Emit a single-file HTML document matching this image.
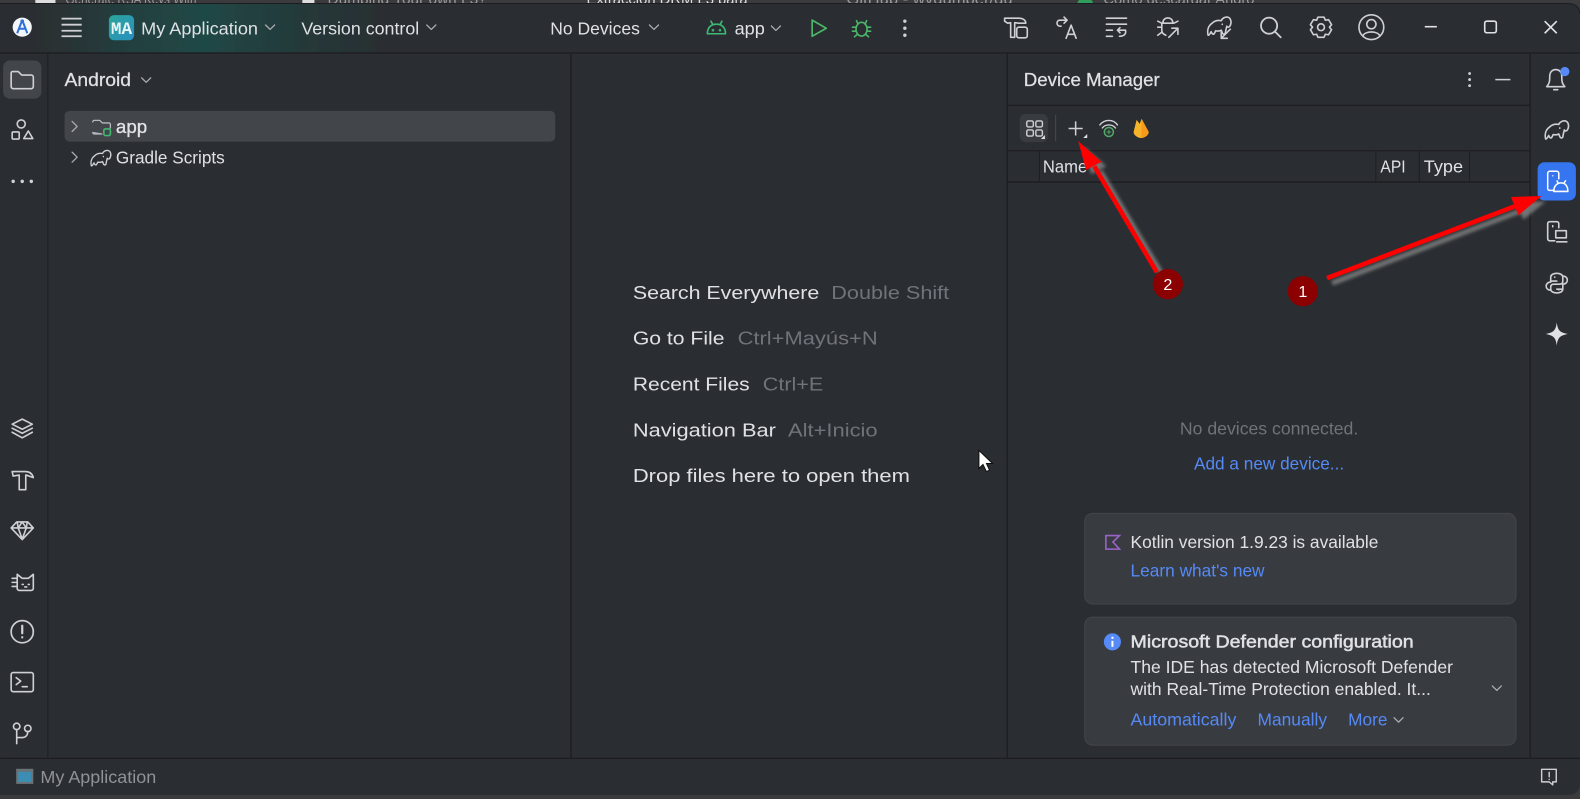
<!DOCTYPE html>
<html><head><meta charset="utf-8"><title>Android Studio</title>
<style>
html,body{margin:0;padding:0;width:1580px;height:799px;overflow:hidden;background:#3a3b3d}
svg{display:block}
text{font-family:"Liberation Sans",sans-serif;font-size:18.5px;fill:#dfe1e5}
.g{fill:#6f737a}.l{fill:#548af7}.s{font-size:17.5px}
.i{fill:none;stroke:#ced0d6;stroke-width:1.6;stroke-linecap:round;stroke-linejoin:round}
.ln{fill:#1e1f22}
</style></head><body>
<svg width="1580" height="799" viewBox="0 0 1568 793" xmlns="http://www.w3.org/2000/svg">
<defs>
<linearGradient id="glow" gradientUnits="userSpaceOnUse" x1="0" y1="0" x2="440" y2="0">
<stop offset="0" stop-color="#2b2d30"/><stop offset=".12" stop-color="#2a3033"/><stop offset=".3" stop-color="#22403f"/><stop offset=".46" stop-color="#1f4846"/><stop offset=".66" stop-color="#243a3a"/><stop offset=".85" stop-color="#292f32"/><stop offset="1" stop-color="#2b2d30"/></linearGradient>
<linearGradient id="ma" x1="0" y1="0" x2="1" y2="1"><stop offset="0" stop-color="#2aa59b"/><stop offset="1" stop-color="#2b8fc0"/></linearGradient>
<filter id="soft" x="0" y="0" width="100%" height="100%"><feGaussianBlur stdDeviation=".35"/></filter>
<filter id="sh" x="-20%" y="-20%" width="140%" height="140%"><feGaussianBlur stdDeviation="1.6"/></filter>
<g id="chev"><path d="M-4.5 -2.2 L0 2.2 L4.5 -2.2" class="i" style="stroke:#a8abb0;stroke-width:1.3"/></g>
<g id="right"><path d="M-2.5 -5 L2.5 0 L-2.5 5" class="i" style="stroke:#a8abb0;stroke-width:1.3"/></g>
<g id="ele"><path d="M-11 9 C-12.500 3 -10 -1 -7 -3 C-4 -6 -1 -6 2 -5.500 C3 -8 6 -9.500 8.500 -9 C12 -8 12.500 -3 10.500 0 C9.500 1.500 8 1 7.500 0 C7 2 6.500 4 6 7 C5 8.500 3.500 8 3 6.500 L2 4 C0 5 -2 5 -3.500 4.500 L-5 7.500 C-6 8.500 -7 7.500 -7.500 6.500 L-8 5.500 C-9 7 -10 9.500 -11 9 Z M3 -2 V-1.800" class="i"/></g>
</defs>

<g filter="url(#soft)">
<!-- browser strip behind -->
<rect width="1568" height="793" fill="#3a3b3d"/>
<rect x="35" y="0" width="20" height="3" fill="#ddd"/>
<text x="65" y="4" textLength="130" lengthAdjust="spacingAndGlyphs" style="font-size:15px;fill:#9a9a9a">Generate RSA Keys With</text>
<text x="325" y="4" textLength="158" lengthAdjust="spacingAndGlyphs" style="font-size:15px;fill:#9a9a9a">Dumping Your own L3?</text>
<rect x="300" y="0" width="12" height="3" fill="#ddd"/>
<text x="582" y="4" textLength="160" lengthAdjust="spacingAndGlyphs" style="font-size:15px;fill:#ddd">Extraccion DRM L3 para</text>
<text x="840" y="4" textLength="165" lengthAdjust="spacingAndGlyphs" style="font-size:15px;fill:#9a9a9a">GitHub - wvdumper/du</text>
<text x="1095" y="4" textLength="150" lengthAdjust="spacingAndGlyphs" style="font-size:15px;fill:#9a9a9a">Cómo descargar Andro</text>
<circle cx="1077" cy="5" r="8" fill="#2f9e5a"/>

<!-- window -->
<path d="M0 4 H1556 Q1568 4 1568 14 V778 Q1568 789 1556 789 H0 Z" fill="#2b2d30"/>
<path d="M0 3.500 H1556 Q1568 4 1568 14" fill="none" stroke="#1e1f22"/>
<rect x="0" y="4" width="440" height="48" fill="url(#glow)"/>
<rect x="0" y="52" width="1568" height="1.3" class="ln"/>
<rect x="47" y="53" width="1" height="699" class="ln"/>
<rect x="566" y="53" width="1.3" height="699" class="ln"/>
<rect x="999" y="53" width="1.3" height="699" class="ln"/>
<rect x="1518" y="53" width="1.3" height="699" class="ln"/>
<rect x="0" y="752" width="1568" height="1.3" class="ln"/>
<rect x="1000" y="104" width="518" height="1.2" class="ln"/>
<rect x="1000" y="149" width="518" height="1.2" class="ln"/>
<rect x="1000" y="180" width="518" height="1.4" class="ln"/>
<rect x="1031" y="150" width="1" height="30" class="ln"/>
<rect x="1365" y="150" width="1" height="30" class="ln"/>
<rect x="1408" y="150" width="1" height="30" class="ln"/>
<rect x="1458" y="150" width="1" height="30" class="ln"/>

<!-- title bar -->
<circle cx="22" cy="27" r="9.500" fill="#f4f6f8"/>
<path d="M22 20 L17 33 M22 20 L27 33 M18 28.500 H26" fill="none" stroke="#2f6fd8" stroke-width="2"/>
<circle cx="22" cy="21" r="1.800" fill="#2f6fd8"/>
<path d="M61 18.500 H81 M61 24.500 H81 M61 30.500 H81 M61 36 H81" fill="none" stroke="#ced0d6" stroke-width="1.800"/>
<rect x="108" y="15" width="25" height="25" rx="5" fill="url(#ma)"/>
<text x="110" y="33.500" textLength="21" lengthAdjust="spacingAndGlyphs" style="font-family:'Liberation Mono',monospace;font-size:17px;font-weight:700;fill:#e8f4f4">MA</text>
<text x="140" y="34" textLength="116" lengthAdjust="spacingAndGlyphs" class="s">My Application</text>
<use href="#chev" x="268" y="27"/>
<text x="299" y="34" textLength="117" lengthAdjust="spacingAndGlyphs" class="s">Version control</text>
<use href="#chev" x="428" y="27"/>
<text x="546" y="34" textLength="89" lengthAdjust="spacingAndGlyphs" class="s">No Devices</text>
<use href="#chev" x="649" y="27"/>
<g transform="translate(711,28)" fill="none" stroke="#3dbb76" stroke-width="1.600" stroke-linecap="round" stroke-linejoin="round">
<path d="M-9 5.500 C-9 -1 -5 -4 0 -4 C5 -4 9 -1 9 5.500 Z M-5.500 -7 L-3.500 -3.500 M5.500 -7 L3.500 -3.500"/><circle cx="-3.500" cy="2" r=".5"/><circle cx="3.500" cy="2" r=".5"/></g>
<text x="729" y="34" textLength="30" lengthAdjust="spacingAndGlyphs" class="s">app</text>
<use href="#chev" x="770" y="28"/>
<path d="M806 20 L820 28 L806 36 Z" fill="none" stroke="#4cb567" stroke-width="1.700" stroke-linejoin="round"/>
<g transform="translate(855,28)" fill="none" stroke="#4cb567" stroke-width="1.600" stroke-linecap="round" stroke-linejoin="round">
<ellipse cx="0" cy="1" rx="5.500" ry="6.800"/><path d="M-3.500 -4 L-5 -7.500 M3.500 -4 L5 -7.500 M-5.500 -1 H-9 M5.500 -1 H9 M-5.500 3 H-9 M5.500 3 H9 M-4 6 L-7 8.500 M4 6 L7 8.500"/></g>
<g fill="#ced0d6"><circle cx="898" cy="21" r="1.700"/><circle cx="898" cy="28" r="1.700"/><circle cx="898" cy="35" r="1.700"/></g>

<g class="i" transform="translate(1008,28)"><path d="M-11 -7 V-10 H3 C7 -10 10 -8 10 -5 H3 L-1 -5.500 V9 H-5 V-5.500 L-8 -5 Z"/><rect x="1" y="-1" width="10.500" height="10.500" rx="2"/></g>
<g class="i" transform="translate(1058,27)"><path d="M1 -7 H-6 C-10 -7 -10 -1 -6 -1 H-5 M1 -7 L-2 -10 M1 -7 L-2 -4"/><path d="M0 11 L5 -2 L10 11 M2 7 H8"/></g>
<g class="i" transform="translate(1108,27)"><path d="M-10 -9 H10 M-10 -3 H10 M-10 3 H-4 M-10 9 H-4 M9 3 H1 L3.500 0.500 M1 3 L3.500 5.500 M9 3 C10 7 7 9 3 9"/></g>
<g class="i" transform="translate(1159,27)"><path d="M-5 -4 C-5 -11 5 -11 5 -4 M-6 -4 H6 M-6 -4 V3 C-6 6 -4 7 -2 8 M-6 0 H-10 M-6 5 L-10 8 M-6 -4 L-10 -6 M6 -4 L10 -6 M1 10 L10 1 M4 1 H10 V7"/></g>
<g transform="translate(1210,26)"><use href="#ele"/><path class="i" d="M11 3 L2 12 M2 6 V12 H8"/></g>
<g class="i" transform="translate(1261,27)" style="stroke-width:1.800"><circle cx="-1.500" cy="-1.500" r="8"/><path d="M4.500 4.500 L10 10"/></g>
<g class="i" transform="translate(1311,27)"><circle r="3.400"/><path d="M-3 -10 H3 L4.300 -7 L7.500 -7.500 L10.500 -2.500 L8.400 0 L10.500 2.500 L7.500 7.500 L4.300 7 L3 10 H-3 L-4.300 7 L-7.500 7.500 L-10.500 2.500 L-8.400 0 L-10.500 -2.500 L-7.500 -7.500 L-4.300 -7 Z"/></g>
<g class="i" transform="translate(1361,27)"><circle r="12.300"/><circle cy="-3" r="4.600"/><path d="M-8.500 8.500 C-6 3.500 6 3.500 8.500 8.500"/></g>
<path d="M1414 26.500 H1426" fill="none" stroke="#dfe1e5" stroke-width="1.600"/>
<rect x="1473.500" y="21" width="11.500" height="11.500" rx="2" fill="none" stroke="#dfe1e5" stroke-width="1.600"/>
<path d="M1533 21 L1545 33 M1545 21 L1533 33" fill="none" stroke="#dfe1e5" stroke-width="1.600"/>

<!-- left strip -->
<rect x="3" y="60" width="38" height="38" rx="7" fill="#43454a"/>
<path class="i" d="M12.500 71 H18 L21.500 74.500 H31 A2 2 0 0 1 33 76.500 V86 A2 2 0 0 1 31 88 H13 A2 2 0 0 1 11 86 V72.500 A1.500 1.500 0 0 1 12.500 71 Z"/>
<g class="i" transform="translate(22,129)"><circle cx="-1" cy="-6" r="4"/><rect x="-10" y="2" width="7" height="7" rx="1"/><path d="M6 1 L10.500 8.500 H1.500 Z"/></g>
<g fill="#ced0d6"><circle cx="13" cy="180" r="1.700"/><circle cx="22" cy="180" r="1.700"/><circle cx="31" cy="180" r="1.700"/></g>
<g class="i" transform="translate(22,425)"><path d="M0 -9 L10 -4 L0 1 L-10 -4 Z M-10 0 L0 5 L10 0 M-10 4 L0 9.500 L10 4"/></g>
<g class="i" transform="translate(22,476)"><path d="M-10 -8 H3 C7 -8 10 -6 11 -2 L4 -4.500 H3.500 V10 H-3 V-4.500 L-9 -3.500 Z"/></g>
<g class="i" transform="translate(22,526)"><path d="M-5.500 -8 H5.500 L11 -2 L0 9.500 L-11 -2 Z M-11 -2 H11 M-4 -2 L0 9 L4 -2 M-5 -8 L-4 -2 L0 -8 L4 -2 L5 -8"/></g>
<g class="i" transform="translate(23,577)"><path d="M-6 -7 L-1 -3 H5 L10 -7 V7 A2 2 0 0 1 8 9 H-4 A2 2 0 0 1 -6 7 Z M-11 -3 H-6 M-11 1 H-6 M-11 5 H-6 M-1 3 L0 3 M5 3 L6 3 M1.500 5.500 H3.500"/></g>
<g class="i" transform="translate(22,627)" style="stroke-width:1.700"><circle r="11"/><path d="M0 -6 V1.500 M0 5.500 V5.600" style="stroke-width:2.200"/></g>
<g class="i" transform="translate(22,677)"><rect x="-11" y="-9.500" width="22" height="19" rx="2"/><path d="M-6 -4.500 L-1.500 -1 L-6 2.500 M0 4.500 H5"/></g>
<g class="i" transform="translate(22,727)"><circle cx="-5.500" cy="-6" r="3.200"/><circle cx="5.500" cy="-4" r="3.200"/><path d="M-5.500 -3 V11 M-5.500 5 H0 C3 5 5.500 3 5.500 -1"/></g>

<!-- project panel -->
<text x="64" y="85.500" textLength="66" lengthAdjust="spacingAndGlyphs" style="font-size:18px;stroke:#dfe1e5;stroke-width:.25">Android</text>
<use href="#chev" x="145" y="79.500"/>
<rect x="64" y="110" width="487" height="30.500" rx="5" fill="#43454a"/>
<use href="#right" x="74" y="125.500"/>
<path class="i" d="M92 121 A1.500 1.500 0 0 1 93.500 119.500 H99 L101.500 122 H108 A1.500 1.500 0 0 1 109.500 123.500 V127 M101 133 H93.500 A1.500 1.500 0 0 1 92 131.500 Z" style="stroke-width:1.300;stroke:#b4b8bf"/>
<rect x="103" y="128" width="6.500" height="6.500" rx="1.500" fill="none" stroke="#3fb96f" stroke-width="1.600"/>
<text x="115" y="132" textLength="31" lengthAdjust="spacingAndGlyphs" style="font-size:18px;stroke:#dfe1e5;stroke-width:.35">app</text>
<use href="#right" x="74" y="156"/>
<g transform="translate(100,157) scale(.85)"><use href="#ele"/></g>
<text x="115" y="162.500" textLength="108" lengthAdjust="spacingAndGlyphs" class="s">Gradle Scripts</text>

<!-- empty editor -->
<text x="628" y="297" textLength="185" lengthAdjust="spacingAndGlyphs">Search Everywhere</text>
<text x="825" y="297" textLength="117" lengthAdjust="spacingAndGlyphs" class="g">Double Shift</text>
<text x="628" y="342" textLength="91" lengthAdjust="spacingAndGlyphs">Go to File</text>
<text x="732" y="342" textLength="139" lengthAdjust="spacingAndGlyphs" class="g">Ctrl+Mayús+N</text>
<text x="628" y="387.500" textLength="116" lengthAdjust="spacingAndGlyphs">Recent Files</text>
<text x="757" y="387.500" textLength="60" lengthAdjust="spacingAndGlyphs" class="g">Ctrl+E</text>
<text x="628" y="433" textLength="142" lengthAdjust="spacingAndGlyphs">Navigation Bar</text>
<text x="782" y="433" textLength="89" lengthAdjust="spacingAndGlyphs" class="g">Alt+Inicio</text>
<text x="628" y="478.500" textLength="275" lengthAdjust="spacingAndGlyphs">Drop files here to open them</text>

<!-- device manager -->
<text x="1016" y="85.500" textLength="135" lengthAdjust="spacingAndGlyphs" style="font-size:18px;stroke:#dfe1e5;stroke-width:.25">Device Manager</text>
<g fill="#ced0d6"><circle cx="1458.500" cy="73" r="1.400"/><circle cx="1458.500" cy="79" r="1.400"/><circle cx="1458.500" cy="85" r="1.400"/></g>
<path d="M1484 79 H1499" stroke="#ced0d6" stroke-width="1.500"/>
<rect x="1012" y="113" width="28" height="28" rx="6" fill="#393b40"/>
<g class="i" style="stroke-width:1.400"><rect x="1019" y="120" width="6.500" height="6" rx="1.500"/><rect x="1028" y="120" width="6.500" height="6" rx="1.500"/><rect x="1019" y="129" width="6.500" height="6" rx="1.500"/><rect x="1028" y="129" width="6.500" height="6" rx="1.500"/></g>
<path d="M1037 134 V138 H1033 Z" fill="#dfe1e5"/>
<rect x="1047" y="114" width="1.200" height="26" fill="#43454a"/>
<path d="M1060.500 127.500 H1074.500 M1067.500 120.500 V134.500" stroke="#ced0d6" stroke-width="1.500"/>
<path d="M1079 133 V137 H1075 Z" fill="#dfe1e5"/>
<g fill="none" stroke-linecap="round"><path d="M1091.500 124 C1096 118 1105 118 1109 124 M1094 127 C1097 123 1104 123 1107 127" stroke="#ced0d6" stroke-width="1.400"/><circle cx="1100.500" cy="131" r="4.500" stroke="#55a76a" stroke-width="1.500"/><path d="M1098.500 131 H1102.500 M1100.500 129 V133" stroke="#55a76a" stroke-width="1"/></g>
<path d="M1125 131 L1128 119 L1131 123 L1133 118 L1140 131 C1140 134 1136 137 1132.500 137 C1129 137 1125 134 1125 131 Z" fill="#f6b42a"/>
<path d="M1133 118 L1140 131 C1140 134 1136 137 1132.500 137 Z" fill="#f79a1e"/>
<text x="1035" y="171" textLength="44" lengthAdjust="spacingAndGlyphs" class="s">Name</text>
<text x="1370" y="171" textLength="25" lengthAdjust="spacingAndGlyphs" class="s">API</text>
<text x="1413" y="171" textLength="39" lengthAdjust="spacingAndGlyphs" class="s">Type</text>
<text x="1171" y="431" textLength="177" lengthAdjust="spacingAndGlyphs" class="g s">No devices connected.</text>
<text x="1185" y="466" textLength="149" lengthAdjust="spacingAndGlyphs" class="l s">Add a new device...</text>

<!-- cards -->
<rect x="1076.500" y="509.500" width="428" height="90" rx="8" fill="#393b40" stroke="#43454a"/>
<path d="M1097.500 531.500 H1111 L1104.500 538 L1111 545 H1097.500 Z" fill="none" stroke="#9a63c9" stroke-width="1.600"/>
<text x="1122" y="544" textLength="246" lengthAdjust="spacingAndGlyphs" class="s">Kotlin version 1.9.23 is available</text>
<text x="1122" y="572" textLength="133" lengthAdjust="spacingAndGlyphs" class="l s">Learn what's new</text>
<rect x="1076.500" y="612.500" width="428" height="127" rx="8" fill="#393b40" stroke="#43454a"/>
<circle cx="1104" cy="637" r="8.500" fill="#548af7"/>
<rect x="1103" y="636" width="2" height="6" fill="#fff"/><rect x="1103" y="632" width="2" height="2" fill="#fff"/>
<text x="1122" y="642.500" textLength="281" lengthAdjust="spacingAndGlyphs" class="s" style="stroke:#dfe1e5;stroke-width:.5">Microsoft Defender configuration</text>
<text x="1122" y="668" textLength="320" lengthAdjust="spacingAndGlyphs" class="s">The IDE has detected Microsoft Defender</text>
<text x="1122" y="690" textLength="298" lengthAdjust="spacingAndGlyphs" class="s">with Real-Time Protection enabled. It...</text>
<use href="#chev" x="1485.500" y="683"/>
<text x="1122" y="720" textLength="105" lengthAdjust="spacingAndGlyphs" class="l s">Automatically</text>
<text x="1248" y="720" textLength="69" lengthAdjust="spacingAndGlyphs" class="l s">Manually</text>
<text x="1338" y="720" textLength="39" lengthAdjust="spacingAndGlyphs" class="l s">More</text>
<use href="#chev" x="1388" y="714.500"/>

<!-- right strip -->
<g class="i" transform="translate(1544,79)"><path d="M-9 7 C-6 4 -6 1 -6 -3 C-6 -8 -3 -10 0 -10 C3 -10 6 -8 6 -3 C6 1 6 4 9 7 Z M-2 10 H2"/></g>
<circle cx="1553" cy="71" r="4.600" fill="#548af7"/>
<g transform="translate(1545,129)"><use href="#ele"/></g>
<rect x="1526" y="161" width="38" height="38" rx="7" fill="#3574f0"/>
<g fill="none" stroke="#fff" stroke-width="1.500" stroke-linejoin="round" transform="translate(1545,180)"><path d="M-2 9 H-7 A2 2 0 0 1 -9 7 V-8 A2 2 0 0 1 -7 -10 H0 A2 2 0 0 1 2 -8 V-2"/><path d="M-4 -6 V-5"/><path d="M-3 10 C-3 4 1 1.500 4 1.500 C8 1.500 11 4 11 10 Z M0 -1 L1.500 2 M9 -1 L7 2"/></g>
<g class="i" transform="translate(1545,230)"><path d="M-2 9 H-7 A2 2 0 0 1 -9 7 V-8 A2 2 0 0 1 -7 -10 H0 A2 2 0 0 1 2 -8 V-4 M-4 -6 V-5"/><rect x="-1" y="-1" width="10.500" height="7"/><path d="M0 10 H10"/></g>
<g class="i" transform="translate(1545,281)"><path d="M-6 -1 V-6 C-6 -11 6 -11 6 -6 V-2 C6 0 5 1 3 1 H-3 C-5 1 -6 2 -6 4 V6 C-6 11 6 11 6 6 V1 M-6 -2 H0 M-6 -1 C-12 -1 -12 7 -6 7 M6 1 C12 1 12 -7 6 -7 M0 6 H6"/><path d="M-2 -6 V-5.900 M2 6.500 V6.600"/></g>
<path d="M1545 320 C1546 328 1548 330 1556 331.500 C1548 333 1546 335 1545 343 C1544 335 1542 333 1534 331.500 C1542 330 1544 328 1545 320 Z" fill="#dfe1e5"/>

<!-- status -->
<rect x="16" y="763" width="17" height="15" fill="#6b7378"/>
<rect x="18" y="766" width="13" height="10" fill="#3b8db3"/>
<text x="40" y="777" textLength="115" lengthAdjust="spacingAndGlyphs" class="s" style="fill:#8f9298">My Application</text>
<g class="i" style="stroke-width:1.400"><path d="M1530 763.500 H1544.500 V776 H1541 V779 L1537.500 776 H1530 Z"/><path d="M1537.500 766.500 V771 M1537.500 773.500 V773.600"/></g>

<!-- cursor -->
<path d="M971.500 447 V465 L975.500 461 L979 468 L982 466.500 L979 460 H985 Z" fill="#fff" stroke="#111" stroke-width="1"/>
</g>

<!-- annotations -->
<g filter="url(#sh)" fill="#8a8a8a" opacity=".75">
<path d="M1322 281 L1510 209" stroke="#8a8a8a" stroke-width="5" fill="none"/>
<path d="M1534 200 L1504 200 L1512 218 Z"/>
<path d="M1153 272 L1092 170" stroke="#8a8a8a" stroke-width="5" fill="none"/>
<path d="M1075 145 L1083 173 L1098 165 Z"/>
</g>
<path d="M1317 276 L1508 203" stroke="#f00" stroke-width="4.500" fill="none"/>
<path d="M1530 194.500 L1499.500 195.500 L1507 213.500 Z" fill="#f00"/>
<path d="M1148 270 L1086 165" stroke="#f00" stroke-width="4.500" fill="none"/>
<path d="M1070 140 L1077.800 168.700 L1093 160.500 Z" fill="#f00"/>
<circle cx="1293" cy="289" r="15" fill="#8b0000"/>
<circle cx="1159" cy="282" r="15" fill="#8b0000"/>
<text x="1293" y="295" text-anchor="middle" style="font-size:16px;fill:#fff">1</text>
<text x="1159" y="288" text-anchor="middle" style="font-size:16px;fill:#fff">2</text>
</svg>
</body></html>
